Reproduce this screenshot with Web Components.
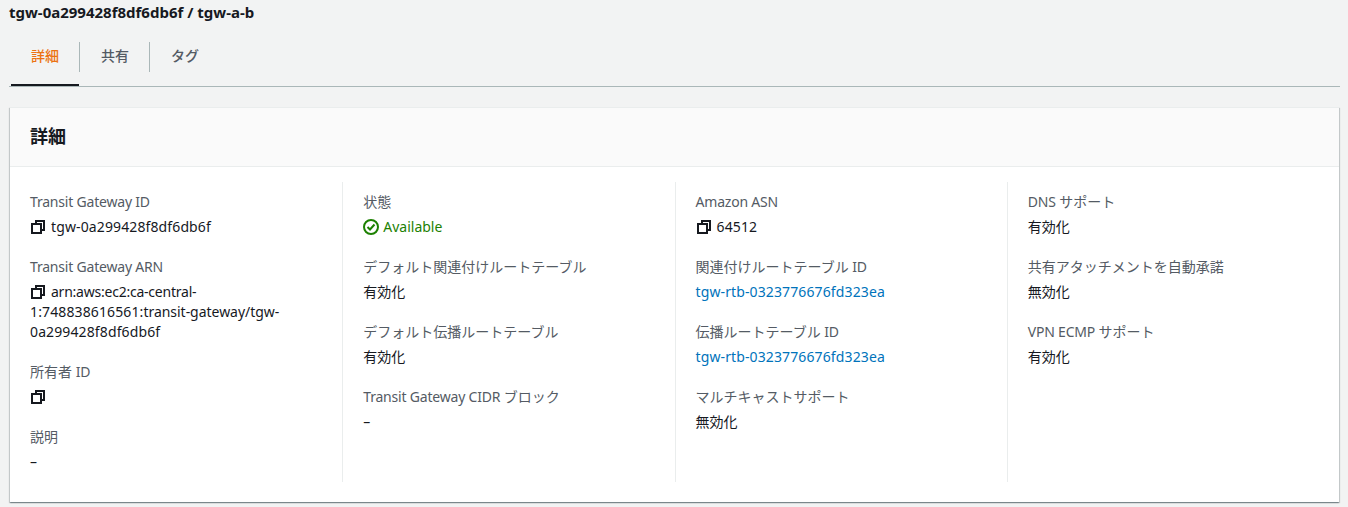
<!DOCTYPE html>
<html lang="ja">
<head>
<meta charset="utf-8">
<style>
  html, body { margin: 0; height: 100%; overflow: hidden; }
  body {
    background: #f2f3f3;
    color: #16191f;
    font: 14px/22px "Noto Sans", "Noto Sans CJK JP", sans-serif;
  }
  a { color: #0073bb; text-decoration: none; }
  .n { letter-spacing: .12px; }
  .t1 { letter-spacing: -.23px; }
  .t2 { letter-spacing: -.03px; }
</style>
</head>
<body>
<detail-page>
  <tab-bar slot="tabs" active="0" items="詳細,共有,タグ"></tab-bar>
  <detail-card heading="詳細">
    <detail-col>
      <kv-item label="Transit Gateway ID"><copy-icon></copy-icon><span class="n">tgw-0a299428f8df6db6f</span></kv-item>
      <kv-item label="Transit Gateway ARN"><copy-icon></copy-icon><span class="t1">arn:aws:ec2:ca-central-</span><span class="n">1:748838616561:</span><span class="t2">transit-gateway/tgw-</span><span class="n">0a299428f8df6db6f</span></kv-item>
      <kv-item label="所有者 ID"><copy-icon></copy-icon></kv-item>
      <kv-item label="説明">–</kv-item>
    </detail-col>
    <detail-col>
      <kv-item label="状態"><status-ok>Available</status-ok></kv-item>
      <kv-item label="デフォルト関連付けルートテーブル">有効化</kv-item>
      <kv-item label="デフォルト伝播ルートテーブル">有効化</kv-item>
      <kv-item label="Transit Gateway CIDR ブロック">–</kv-item>
    </detail-col>
    <detail-col>
      <kv-item label="Amazon ASN"><copy-icon></copy-icon><span class="n">64512</span></kv-item>
      <kv-item label="関連付けルートテーブル ID"><a class="n" href="#">tgw-rtb-0323776676fd323ea</a></kv-item>
      <kv-item label="伝播ルートテーブル ID"><a class="n" href="#">tgw-rtb-0323776676fd323ea</a></kv-item>
      <kv-item label="マルチキャストサポート">無効化</kv-item>
    </detail-col>
    <detail-col>
      <kv-item label="DNS サポート">有効化</kv-item>
      <kv-item label="共有アタッチメントを自動承諾">無効化</kv-item>
      <kv-item label="VPN ECMP サポート">有効化</kv-item>
    </detail-col>
  </detail-card>
</detail-page>

<script>
class DetailPage extends HTMLElement {
  constructor() {
    super();
    this.attachShadow({ mode: "open" });
  }
  connectedCallback() {
    this.shadowRoot.innerHTML = `
      <style>
        :host { display: block; padding: 1px 9px 0 10px; }
        h1 { margin: 0 0 0 -1px; font-size: 15px; line-height: 22px; font-weight: 700; }
        .tabs { display: block; margin-top: 19px; }
        .body { display: block; margin-top: 20px; }
      </style>
      <h1>tgw-0a299428f8df6db6f / tgw-a-b</h1>
      <div class="tabs"><slot name="tabs"></slot></div>
      <div class="body"><slot></slot></div>
    `;
  }
}

class TabBar extends HTMLElement {
  constructor() {
    super();
    this.attachShadow({ mode: "open" });
  }
  connectedCallback() {
    const items = this.getAttribute("items").split(",");
    const active = Number(this.getAttribute("active"));
    this.shadowRoot.innerHTML = `
      <style>
        :host { display: flex; height: 44px; border-bottom: 1px solid #aab7b8; margin-left: -1px; margin-right: -1px; padding-left: 2px; }
        .tab {
          height: 44px; box-sizing: border-box;
          padding: 3px 20px 0 22px; color: #545b64; font-weight: 500; font-size: 14px;
          position: relative;
        }
        .tab + .tab::before {
          content: ""; position: absolute; left: 0; top: 0; height: 30px; width: 1px; background: #aab7b8;
        }
        .tab.on { color: #ec7211; border-bottom: 2px solid #16191f; padding: 3px 20px 0 20px; }
      </style>
      ${items.map((t, i) => `<div class="tab${i === active ? " on" : ""}">${t}</div>`).join("")}
    `;
  }
}

class DetailCard extends HTMLElement {
  constructor() {
    super();
    this.attachShadow({ mode: "open" });
  }
  connectedCallback() {
    this.shadowRoot.innerHTML = `
      <style>
        :host {
          display: block; height: 395px; box-sizing: border-box; background: #fff;
          border-top: 1px solid #eaeded;
          box-shadow: 0 1px 1px 0 rgba(0,28,36,.3), 1px 1px 1px 0 rgba(0,28,36,.15), -1px 1px 1px 0 rgba(0,28,36,.15);
        }
        header {
          height: 59px; box-sizing: border-box; background: #fafafa; border-bottom: 1px solid #eaeded;
          padding: 0 20px 2px; display: flex; align-items: center;
          font-size: 18px; font-weight: 700;
        }
        .grid { display: grid; grid-template-columns: repeat(4, 1fr); padding-top: 15px; }
      </style>
      <header>${this.getAttribute("heading")}</header>
      <div class="grid"><slot></slot></div>
    `;
  }
}

class DetailCol extends HTMLElement {
  constructor() {
    super();
    this.attachShadow({ mode: "open" });
  }
  connectedCallback() {
    this.shadowRoot.innerHTML = `
      <style>
        :host {
          display: flex; flex-direction: column; gap: 19px; height: 300px; box-sizing: border-box;
          padding: 9px 20px 0 20px; border-left: 1px solid #eaeded;
        }
        :host(:first-child) { border-left: 0; }
      </style>
      <slot></slot>
    `;
  }
}

class KvItem extends HTMLElement {
  constructor() {
    super();
    this.attachShadow({ mode: "open" });
  }
  connectedCallback() {
    // latin runs in the labels are a bit tighter than in the values
    const label = this.getAttribute("label").replace(/[A-Za-z][A-Za-z ]*/g, m => `<span class="l">${m}</span>`);
    this.shadowRoot.innerHTML = `
      <style>
        :host { display: block; }
        .k { color: #545b64; line-height: 22px; }
        .l { letter-spacing: -.2px; }
        .v { color: #16191f; line-height: 20px; min-height: 20px; margin-top: 4px; }
      </style>
      <div class="k">${label}</div>
      <div class="v"><slot></slot></div>
    `;
  }
}

class CopyIcon extends HTMLElement {
  constructor() {
    super();
    this.attachShadow({ mode: "open" });
  }
  connectedCallback() {
    this.shadowRoot.innerHTML = `
      <style>
        :host { display: inline-block; width: 16px; height: 16px; margin-right: 5px; vertical-align: -3px; }
        svg { display: block; }
      </style>
      <svg width="16" height="16" viewBox="0 0 16 16" fill="none" stroke="#16191f" stroke-width="2">
        <rect x="2" y="5" width="9" height="9"/>
        <path d="M6 4V2h8v9h-2"/>
      </svg>
    `;
  }
}

class StatusOk extends HTMLElement {
  constructor() {
    super();
    this.attachShadow({ mode: "open" });
  }
  connectedCallback() {
    this.shadowRoot.innerHTML = `
      <style>
        :host { display: flex; align-items: center; gap: 4px; color: #1d8102; height: 20px; }
        svg { display: block; }
      </style>
      <svg width="16" height="16" viewBox="0 0 16 16" fill="none" stroke="#1d8102" stroke-width="2">
        <circle cx="8" cy="8" r="7"/>
        <path d="M4.5 8l2.5 2.5L11.5 5.5"/>
      </svg>
      <span><slot></slot></span>
    `;
  }
}

customElements.define("detail-page", DetailPage);
customElements.define("tab-bar", TabBar);
customElements.define("detail-card", DetailCard);
customElements.define("detail-col", DetailCol);
customElements.define("kv-item", KvItem);
customElements.define("copy-icon", CopyIcon);
customElements.define("status-ok", StatusOk);
</script>
</body>
</html>
